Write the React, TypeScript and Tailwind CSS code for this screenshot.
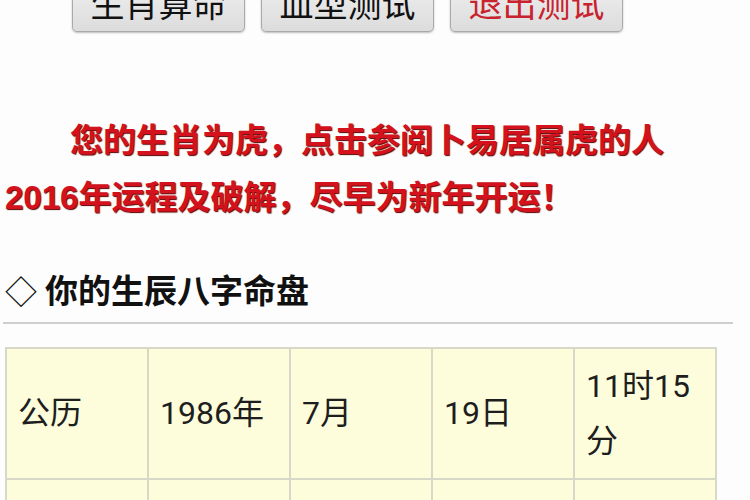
import React from "react";

const buttons = [
  { label: "生肖算命", red: false },
  { label: "血型测试", red: false },
  { label: "退出测试", red: true },
];

const solarRow = ["公历", "1986年", "7月", "19日", "11时15分"];

const App = () => {
  return (
    <div
      className="w-[750px] h-[500px] overflow-hidden bg-[#fdfdfd]"
      style={{ fontFamily: 'Roboto, "Noto Sans CJK SC", sans-serif' }}
    >
      {/* top buttons, cut off by the top edge */}
      <div className="flex gap-[16px] pl-[72px] -mt-[30px]">
        {buttons.map((b) => (
          <div
            key={b.label}
            className={`w-[173px] h-[62px] flex items-center justify-center pt-[4px] rounded-[5px] border border-[#a9a9a9] bg-gradient-to-b from-[#f4f4f4] to-[#dcdcdc] shadow-[0_1px_2px_rgba(0,0,0,0.25)] text-[34px] leading-none ${
              b.red ? "text-[#c8232f]" : "text-[#111]"
            }`}
            style={{ fontFamily: '"Noto Sans CJK SC", sans-serif' }}
          >
            {b.label}
          </div>
        ))}
      </div>

      {/* red promo text */}
      <p
        className="mt-[80px] pl-[5px] indent-[65px] text-[33px] leading-[57px] font-bold text-[#d3121d]"
        style={{
          fontFamily: '"Liberation Sans", "Noto Sans CJK SC", sans-serif',
          textShadow: "1px 1px 1px #5a0000",
        }}
      >
        您的生肖为虎，点击参阅卜易居属虎的人
        <br />
        2016年运程及破解，尽早为新年开运！
      </p>

      {/* section heading */}
      <div
        className="mt-[44px] pl-[5px] flex items-center h-[40px] text-[33px] font-bold text-[#111]"
        style={{ fontFamily: '"Noto Sans CJK SC", sans-serif' }}
      >
        <span className="w-[40px] text-[32px] font-normal">◇</span>
        <span>你的生辰八字命盘</span>
      </div>
      <div className="mt-[12px] ml-[3px] w-[730px] h-[2px] bg-[#cfcfcf]" />

      {/* bazi table */}
      <table className="mt-[23px] ml-[5px] w-[711px] table-fixed border-collapse bg-[#fdfddc]">
        <tbody>
          <tr>
            {solarRow.map((c) => (
              <td
                key={c}
                className="w-[142px] h-[131px] px-[11px] align-middle border-2 border-[#d8d8c8] text-[32px] leading-[55px] text-[#1e1e1e]"
              >
                {c}
              </td>
            ))}
          </tr>
          <tr>
            {solarRow.map((c) => (
              <td
                key={c}
                className="w-[142px] h-[131px] border-2 border-[#d8d8c8]"
              />
            ))}
          </tr>
        </tbody>
      </table>
    </div>
  );
};

export default App;
